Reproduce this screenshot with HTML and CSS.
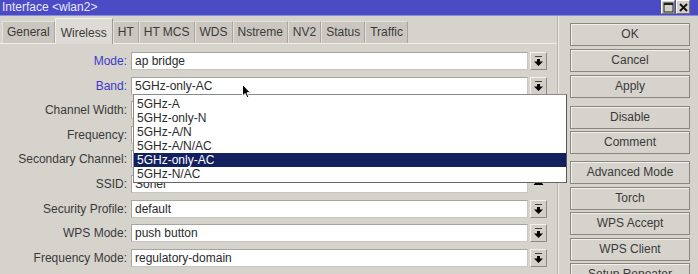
FILE: index.html
```html
<!DOCTYPE html>
<html>
<head>
<meta charset="utf-8">
<link rel="stylesheet" href="styles.css">
</head>
<body>
<div class="window">
  <div class="titlebar">
    <span class="title">Interface &lt;wlan2&gt;</span>
    <div class="tb-buttons">
      <span class="tb-btn"><svg width="11" height="11" viewBox="0 0 11 11"><rect x="1" y="1" width="9" height="9" fill="none" stroke="#222" stroke-width="1"/><rect x="1" y="1" width="9" height="2" fill="#222"/></svg></span>
      <span class="tb-btn"><svg width="11" height="11" viewBox="0 0 11 11"><path d="M2 2 L9 9 M9 2 L2 9" stroke="#111" stroke-width="1.8"/></svg></span>
    </div>
  </div>
  <div class="main">
    <div class="pane">
      <div class="tabs">
        <span class="tab">General</span>
        <span class="tab active">Wireless</span>
        <span class="tab">HT</span>
        <span class="tab">HT MCS</span>
        <span class="tab">WDS</span>
        <span class="tab">Nstreme</span>
        <span class="tab">NV2</span>
        <span class="tab">Status</span>
        <span class="tab">Traffic</span>
      </div>
      <div class="form">
        <div class="row"><label class="lbl blue">Mode:</label><div class="field">ap bridge</div><span class="dd"><svg width="9" height="10" viewBox="0 0 9 10"><rect x="1" y="0" width="7" height="1" fill="#444"/><rect x="3" y="3" width="3" height="3" fill="#000"/><path d="M0 5.5 H9 L4.5 10 Z" fill="#000"/></svg></span></div>
        <div class="row"><label class="lbl blue">Band:</label><div class="field">5GHz-only-AC</div><span class="dd"><svg width="9" height="10" viewBox="0 0 9 10"><rect x="1" y="0" width="7" height="1" fill="#444"/><rect x="3" y="3" width="3" height="3" fill="#000"/><path d="M0 5.5 H9 L4.5 10 Z" fill="#000"/></svg></span></div>
        <div class="row"><label class="lbl">Channel Width:</label><div class="field"></div><span class="dd"></span></div>
        <div class="row"><label class="lbl">Frequency:</label><div class="field"></div><span class="dd"></span></div>
        <div class="row"><label class="lbl">Secondary Channel:</label><div class="field"></div><span class="dd"></span></div>
        <div class="row"><label class="lbl">SSID:</label><div class="field">Sonel</div><span class="up"><svg width="11" height="9" viewBox="0 0 11 9"><path d="M0.5 8 L5.5 2 L10.5 8 Z" fill="#000"/></svg></span></div>
        <div class="row"><label class="lbl">Security Profile:</label><div class="field">default</div><span class="dd"><svg width="9" height="10" viewBox="0 0 9 10"><rect x="1" y="0" width="7" height="1" fill="#444"/><rect x="3" y="3" width="3" height="3" fill="#000"/><path d="M0 5.5 H9 L4.5 10 Z" fill="#000"/></svg></span></div>
        <div class="row"><label class="lbl">WPS Mode:</label><div class="field">push button</div><span class="dd"><svg width="9" height="10" viewBox="0 0 9 10"><rect x="1" y="0" width="7" height="1" fill="#444"/><rect x="3" y="3" width="3" height="3" fill="#000"/><path d="M0 5.5 H9 L4.5 10 Z" fill="#000"/></svg></span></div>
        <div class="row"><label class="lbl">Frequency Mode:</label><div class="field">regulatory-domain</div><span class="dd"><svg width="9" height="10" viewBox="0 0 9 10"><rect x="1" y="0" width="7" height="1" fill="#444"/><rect x="3" y="3" width="3" height="3" fill="#000"/><path d="M0 5.5 H9 L4.5 10 Z" fill="#000"/></svg></span></div>
      </div>
    </div>
    <div class="side">
      <div class="group">
        <span class="btn">OK</span>
        <span class="btn">Cancel</span>
        <span class="btn">Apply</span>
      </div>
      <div class="group g2">
        <span class="btn">Disable</span>
        <span class="btn">Comment</span>
      </div>
      <div class="group g3">
        <span class="btn">Advanced Mode</span>
        <span class="btn">Torch</span>
        <span class="btn">WPS Accept</span>
        <span class="btn">WPS Client</span>
        <span class="btn">Setup Repeater</span>
      </div>
    </div>
  </div>
  <ul class="list">
    <li>5GHz-A</li>
    <li>5GHz-only-N</li>
    <li>5GHz-A/N</li>
    <li>5GHz-A/N/AC</li>
    <li class="sel">5GHz-only-AC</li>
    <li>5GHz-N/AC</li>
  </ul>
  <svg class="cursor" width="10" height="15" viewBox="0 0 10 15"><path d="M0.5 0.5 L0.5 12 L3.2 9.5 L5 13.8 L6.8 13 L5 8.8 L8.5 8.8 Z" fill="#000" stroke="#fff" stroke-width="1"/></svg>
</div>
</body>
</html>
```
FILE: styles.css
```css
html, body {
  margin: 0;
  padding: 0;
  width: 698px;
  height: 274px;
  overflow: hidden;
  background: #d6d3cd;
  font-family: "Liberation Sans", Arial, sans-serif;
  font-size: 12px;
  color: #3a3a3a;
}
.window {
  position: relative;
  width: 698px;
  height: 274px;
  overflow: hidden;
}
.titlebar {
  height: 15px;
  background: #4b4bc6;
  border-bottom: 1px solid #8d8dd8;
  display: flex;
  align-items: center;
  justify-content: space-between;
}
.title {
  color: #e8e8ff;
  padding-left: 2px;
  font-size: 12px;
  line-height: 15px;
}
.tb-buttons {
  display: flex;
  gap: 1px;
  padding-right: 8px;
  align-self: flex-start;
}
.tb-btn {
  width: 14px;
  height: 14px;
  background: #d4d0c8;
  border: 1px solid #777;
  border-top-color: #fff;
  border-left-color: #fff;
  box-sizing: border-box;
  display: flex;
  align-items: center;
  justify-content: center;
}
.main {
  display: flex;
}
.pane {
  width: 557px;
  height: 258px;
  border-right: 1px solid #b8b5ae;
  box-shadow: 1px 0 0 #eeece8;
}
.tabs {
  display: flex;
  align-items: flex-end;
  height: 27px;
  padding-left: 2px;
  border-bottom: 1px solid #f0eee9;
}
.tab {
  height: 21px;
  line-height: 21px;
  padding: 0 4px;
  background: #cbc7c0;
  border: 1px solid #e4e1dc;
  border-bottom: none;
  border-right-color: #aaa69f;
  margin-right: 0;
  color: #3a3a3a;
}
.tab.active {
  height: 25px;
  line-height: 28px;
  padding: 0 5px;
  background: #dedbd6;
  border-color: #f4f2ee;
  border-right-color: #9f9b94;
  margin-bottom: -1px;
  position: relative;
}
.form {
  display: flex;
  flex-direction: column;
  gap: 6.6px;
  padding-top: 8px;
}
.row {
  display: flex;
  align-items: center;
  height: 18px;
}
.lbl {
  width: 130px;
  text-align: right;
  padding-right: 3px;
  box-sizing: border-box;
  color: #3a3a3a;
}
.lbl.blue { color: #3a3ac4; }
.field {
  width: 397px;
  height: 18px;
  line-height: 17px;
  box-sizing: border-box;
  background: #fff;
  border: 1px solid #a8a5a0;
  border-bottom-color: #c8c5c0;
  border-right-color: #c8c5c0;
  padding-left: 3px;
  margin-left: 1px;
  color: #2a2a2a;
}
.dd {
  width: 17px;
  height: 18px;
  box-sizing: border-box;
  margin-left: 2px;
  background: #d4d0c8;
  border: 1px solid #8e8b86;
  border-top-color: #f4f2ee;
  border-left-color: #f4f2ee;
  display: flex;
  align-items: center;
  justify-content: center;
}
.up {
  width: 17px;
  height: 18px;
  margin-left: 2px;
  display: flex;
  justify-content: center;
  align-items: flex-start;
  padding-top: 2px;
  box-sizing: border-box;
}
.side {
  padding-left: 12px;
  padding-top: 7px;
  display: flex;
  flex-direction: column;
}
.group {
  display: flex;
  flex-direction: column;
  gap: 3px;
}
.g2 { margin-top: 8px; gap: 2px; }
.g3 { margin-top: 7px; gap: 2.5px; }
.btn {
  width: 120px;
  height: 23px;
  flex: none;
  box-sizing: border-box;
  border: 1px solid #8a8781;
  box-shadow: inset 1px 1px 0 #f2f0ec;
  background: #d6d3cd;
  text-align: center;
  line-height: 21px;
  color: #3a3a3a;
}
.list {
  position: absolute;
  left: 133px;
  top: 94px;
  width: 434px;
  margin: 0;
  padding: 2px 0 0 0;
  list-style: none;
  background: #fff;
  border: 1px solid #8a8a8a;
  border-right-color: #555;
  border-bottom-color: #666;
  box-sizing: border-box;
  height: 89px;
}
.list li {
  height: 14px;
  line-height: 14px;
  padding-left: 3px;
  color: #2a2a2a;
}
.list li.sel {
  background: #12205f;
  color: #fff;
}
.cursor {
  position: absolute;
  left: 242px;
  top: 84px;
}
```
